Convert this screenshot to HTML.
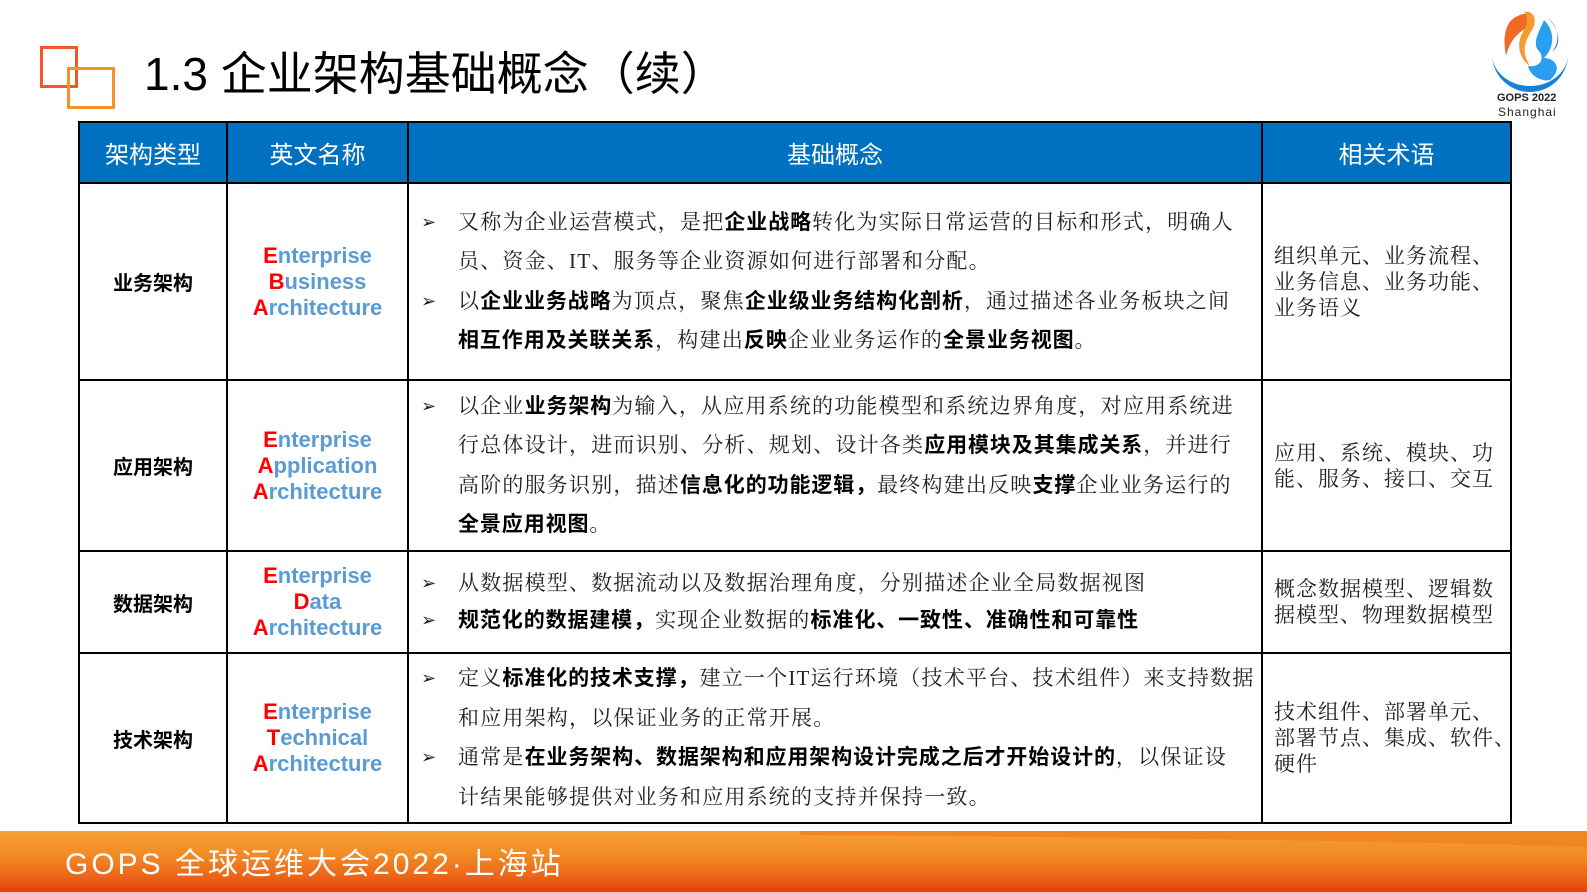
<!DOCTYPE html>
<html><head><meta charset="utf-8"><style>
*{margin:0;padding:0;box-sizing:border-box}
body{width:1587px;height:892px;position:relative;background:#fff;overflow:hidden;font-family:"Liberation Sans","Noto Sans CJK SC",sans-serif}
.a{position:absolute}
.title{left:144px;top:38px;font-size:46px;color:#000;white-space:nowrap}
table{position:absolute;left:78px;top:121px;width:1432px;border-collapse:collapse;table-layout:fixed}
td,th{border:2.5px solid #000;vertical-align:middle;text-align:center}
th{background:#0070c0;color:#fff;font-weight:normal;font-size:24px;height:61px}
.k{font-weight:bold;font-size:20px;color:#000}
.en{font-weight:bold;font-size:22px;line-height:26px;color:#5b9bd5}
.en b{color:#ff0000}
.c{text-align:left;font-family:"Liberation Serif","Noto Serif CJK SC",serif;font-size:21px;letter-spacing:1.2px;color:#222;line-height:39.5px;padding-left:12px;white-space:nowrap}
.c b{color:#000;font-family:"Liberation Sans","Noto Sans CJK SC",sans-serif;font-weight:bold;letter-spacing:0.9px}
.c p{position:relative;padding-left:37px}
.c p i{position:absolute;left:0;font-style:normal;font-family:"DejaVu Sans",sans-serif;font-size:18px}
.t{text-align:left;font-family:"Liberation Serif","Noto Serif CJK SC",serif;font-size:21px;letter-spacing:1px;color:#222;line-height:26px;padding-left:11px;white-space:nowrap}
.foot{left:0;top:831px;width:1587px;height:61px;background:linear-gradient(180deg,#f6a030 0%,#f28a26 40%,#ec6418 75%,#e63e0c 100%)}
</style></head><body>
<svg class="a" style="left:40px;top:46px" width="78" height="64"><rect x="1.5" y="1.5" width="35" height="39" fill="none" stroke="#f4562c" stroke-width="3"/><rect x="28.5" y="22.5" width="45" height="39" fill="none" stroke="#f7922a" stroke-width="3"/></svg>
<div class="a title">1.3 企业架构基础概念（续）</div>
<svg class="a" style="left:1488px;top:6px" width="84" height="86" viewBox="0 0 84 86">
<path d="M4 48 A38 38 0 0 0 80 48 A38 32 0 0 1 4 48Z" fill="#1a7fd6"/>
<path d="M30 10 C18 14 14 30 18 50 C22 34 30 26 42 20 C48 12 40 4 30 10Z" fill="#f06a24"/>
<path d="M36 6 C46 4 50 14 44 24 C38 34 32 44 42 60 C30 52 28 36 36 24 C40 16 40 10 36 6Z" fill="#f49b30"/>
<path d="M56 14 C68 26 66 42 56 52 C66 52 76 62 62 74 C54 76 42 70 40 60 C52 62 58 52 50 44 C44 36 52 24 56 14Z" fill="#2a9ff0"/>
<path d="M60 12 C72 22 72 36 64 46 C72 40 74 26 60 12Z" fill="#1a6fc8"/>
</svg>
<div class="a" style="left:1497px;top:92px;font-size:11px;font-weight:bold;color:#222">GOPS 2022</div>
<div class="a" style="left:1498px;top:105px;font-size:12px;color:#222;letter-spacing:1px">Shanghai</div>
<table>
<colgroup><col style="width:148px"><col style="width:181px"><col style="width:854px"><col style="width:249px"></colgroup>
<tr><th>架构类型</th><th>英文名称</th><th>基础概念</th><th>相关术语</th></tr>
<tr style="height:197px"><td class="k">业务架构</td><td class="en"><b>E</b>nterprise<br><b>B</b>usiness<br><b>A</b>rchitecture</td>
<td class="c"><p><i>➢</i>又称为企业运营模式，是把<b>企业战略</b>转化为实际日常运营的目标和形式，明确人<br>员、资金、IT、服务等企业资源如何进行部署和分配。</p><p><i>➢</i>以<b>企业业务战略</b>为顶点，聚焦<b>企业级业务结构化剖析</b>，通过描述各业务板块之间<br><b>相互作用及关联关系</b>，构建出<b>反映</b>企业业务运作的<b>全景业务视图</b>。</p></td>
<td class="t">组织单元、业务流程、<br>业务信息、业务功能、<br>业务语义</td></tr>
<tr style="height:171px"><td class="k">应用架构</td><td class="en"><b>E</b>nterprise<br><b>A</b>pplication<br><b>A</b>rchitecture</td>
<td class="c"><p><i>➢</i>以企业<b>业务架构</b>为输入，从应用系统的功能模型和系统边界角度，对应用系统进<br>行总体设计，进而识别、分析、规划、设计各类<b>应用模块及其集成关系</b>，并进行<br>高阶的服务识别，描述<b>信息化的功能逻辑，</b>最终构建出反映<b>支撑</b>企业业务运行的<br><b>全景应用视图</b>。</p></td>
<td class="t">应用、系统、模块、功<br>能、服务、接口、交互</td></tr>
<tr style="height:102px"><td class="k">数据架构</td><td class="en"><b>E</b>nterprise<br><b>D</b>ata<br><b>A</b>rchitecture</td>
<td class="c" style="line-height:37px"><p><i>➢</i>从数据模型、数据流动以及数据治理角度，分别描述企业全局数据视图</p><p><i>➢</i><b>规范化的数据建模，</b>实现企业数据的<b>标准化、一致性、准确性和可靠性</b></p></td>
<td class="t">概念数据模型、逻辑数<br>据模型、物理数据模型</td></tr>
<tr style="height:170px"><td class="k">技术架构</td><td class="en"><b>E</b>nterprise<br><b>T</b>echnical<br><b>A</b>rchitecture</td>
<td class="c"><p><i>➢</i>定义<b>标准化的技术支撑，</b>建立一个IT运行环境（技术平台、技术组件）来支持数据<br>和应用架构，以保证业务的正常开展。</p><p><i>➢</i>通常是<b>在业务架构、数据架构和应用架构设计完成之后才开始设计的</b>，以保证设<br>计结果能够提供对业务和应用系统的支持并保持一致。</p></td>
<td class="t">技术组件、部署单元、<br>部署节点、集成、软件、<br>硬件</td></tr>
</table>
<div class="a foot"></div>
<svg class="a" style="left:0;top:831px" width="1587" height="61"><path d="M800 4 C1100 6 1400 10 1587 16 L1587 0 L800 0Z" fill="#f07e1c" opacity=".7"/></svg>
<div class="a" style="left:65px;top:839px;font-size:30px;color:#fff;letter-spacing:3px;white-space:nowrap">GOPS 全球运维大会2022·上海站</div>
</body></html>
